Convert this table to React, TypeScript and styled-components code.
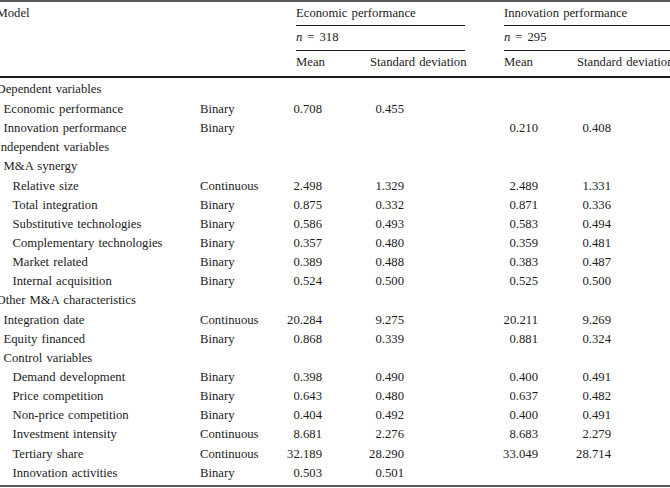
import { FC } from 'react'
import styled, { createGlobalStyle } from 'styled-components'

interface Row {
  label: string
  level: 0 | 1 | 2
  type?: string
  values?: [string, string, string, string]
}

const rows: Row[] = [
  { label: 'Dependent variables', level: 0 },
  { label: 'Economic performance', level: 1, type: 'Binary', values: ['0.708', '0.455', '', ''] },
  { label: 'Innovation performance', level: 1, type: 'Binary', values: ['', '', '0.210', '0.408'] },
  { label: 'Independent variables', level: 0 },
  { label: 'M&A synergy', level: 1 },
  { label: 'Relative size', level: 2, type: 'Continuous', values: ['2.498', '1.329', '2.489', '1.331'] },
  { label: 'Total integration', level: 2, type: 'Binary', values: ['0.875', '0.332', '0.871', '0.336'] },
  { label: 'Substitutive technologies', level: 2, type: 'Binary', values: ['0.586', '0.493', '0.583', '0.494'] },
  { label: 'Complementary technologies', level: 2, type: 'Binary', values: ['0.357', '0.480', '0.359', '0.481'] },
  { label: 'Market related', level: 2, type: 'Binary', values: ['0.389', '0.488', '0.383', '0.487'] },
  { label: 'Internal acquisition', level: 2, type: 'Binary', values: ['0.524', '0.500', '0.525', '0.500'] },
  { label: 'Other M&A characteristics', level: 0 },
  { label: 'Integration date', level: 1, type: 'Continuous', values: ['20.284', '9.275', '20.211', '9.269'] },
  { label: 'Equity financed', level: 1, type: 'Binary', values: ['0.868', '0.339', '0.881', '0.324'] },
  { label: 'Control variables', level: 1 },
  { label: 'Demand development', level: 2, type: 'Binary', values: ['0.398', '0.490', '0.400', '0.491'] },
  { label: 'Price competition', level: 2, type: 'Binary', values: ['0.643', '0.480', '0.637', '0.482'] },
  { label: 'Non-price competition', level: 2, type: 'Binary', values: ['0.404', '0.492', '0.400', '0.491'] },
  { label: 'Investment intensity', level: 2, type: 'Continuous', values: ['8.681', '2.276', '8.683', '2.279'] },
  { label: 'Tertiary share', level: 2, type: 'Continuous', values: ['32.189', '28.290', '33.049', '28.714'] },
  { label: 'Innovation activities', level: 2, type: 'Binary', values: ['0.503', '0.501', '', ''] },
]

// numbers end at a fixed point inside their column (the printed table aligns on the decimals)
const valuePad = [48, 61, 39, 86]
const valueCol = [3, 4, 6, 7]
const indent = [0, 7, 16]

const App: FC = () => {
  return (
    <>
      <GlobalStyle />
      <Table>
        <Head>
          <HeadCell $col='1' $row='1 / span 3'>Model</HeadCell>
          <HeadCell $col='3 / span 2' $row='1' $rule>Economic performance</HeadCell>
          <HeadCell $col='6 / span 2' $row='1' $rule>Innovation performance</HeadCell>
          <HeadCell $col='3 / span 2' $row='2' $rule $tall>
            <Italic>n</Italic>
            <Eq>=</Eq>318
          </HeadCell>
          <HeadCell $col='6 / span 2' $row='2' $rule $tall>
            <Italic>n</Italic>
            <Eq>=</Eq>295
          </HeadCell>
          <HeadCell $col='3' $row='3' $tall>Mean</HeadCell>
          <HeadCell $col='4' $row='3' $tall $alignRight>Standard deviation</HeadCell>
          <HeadCell $col='6' $row='3' $tall>Mean</HeadCell>
          <HeadCell $col='7' $row='3' $tall>Standard deviation</HeadCell>
        </Head>

        <Body>
          {rows.map((row, r) => (
            <BodyRow key={row.label} $first={r === 0}>
              <Label $indent={indent[row.level]}>{row.label}</Label>
              <Type>{row.type}</Type>
              {row.values?.map((v, i) => (
                <Value key={i} $col={valueCol[i]} $pad={valuePad[i]}>
                  {v}
                </Value>
              ))}
            </BodyRow>
          ))}
        </Body>
      </Table>
    </>
  )
}

const GlobalStyle = createGlobalStyle`
  html, body {
    margin: 0;
    padding: 0;
    background: #ffffff;
    overflow: hidden;
  }
  body {
    width: 670px;
    height: 488px;
  }
`

const columns = '204px 96px 74px 95px 39px 73px 120px'

const Table = styled.div`
  margin-left: -4px;
  width: 701px;
  border-top: 2px solid #5a5a5a;
  border-bottom: 2px solid #5a5a5a;
  font-family: 'Liberation Serif', 'Times New Roman', serif;
  font-size: 12.7px;
  color: #1c1c1c;
`

const Head = styled.div`
  display: grid;
  grid-template-columns: ${columns};
  border-bottom: 2px solid #1c1c1c;
`

const HeadCell = styled.div<{
  $col: string
  $row: string
  $rule?: boolean
  $alignRight?: boolean
  $tall?: boolean
}>`
  grid-column: ${(p) => p.$col};
  grid-row: ${(p) => p.$row};
  height: ${(p) => (p.$tall ? 24 : 23)}px;
  line-height: 23px;
  white-space: nowrap;
  padding-left: ${(p) => (p.$col === '1' ? '0.5px' : '0')};
  text-align: ${(p) => (p.$alignRight ? 'right' : 'left')};
  border-bottom: 1px solid ${(p) => (p.$rule ? '#1c1c1c' : 'transparent')};
  word-spacing: 1px;
`

const Italic = styled.span`
  font-style: italic;
`

const Eq = styled.span`
  margin: 0 5px 0 5px;
`

const Body = styled.div`
  padding-top: 1px;
  padding-bottom: 2px;
`

const BodyRow = styled.div<{ $first: boolean }>`
  display: grid;
  grid-template-columns: ${columns};
  align-items: center;
  height: ${(p) => (p.$first ? 21 : 19.15)}px;
  white-space: nowrap;
`

const Label = styled.div<{ $indent: number }>`
  grid-column: 1;
  padding-left: ${(p) => p.$indent + 0.5}px;
  word-spacing: 1px;
`

const Type = styled.div`
  grid-column: 2;
`

const Value = styled.div<{ $col: number; $pad: number }>`
  grid-column: ${(p) => p.$col};
  justify-self: end;
  margin-right: ${(p) => p.$pad}px;
`

export default App
